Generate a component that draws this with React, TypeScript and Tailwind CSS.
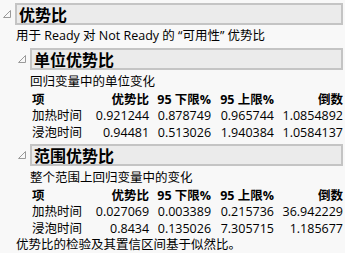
const font = { fontFamily: '"Segoe UI", "Open Sans", "Noto Sans CJK SC", sans-serif' };

const Tri = () => (
  <svg width="10" height="10" viewBox="0 0 10 10" className="shrink-0">
    <path d="M1.5 8.5 L8.5 8.5 L8.5 1.5 Z" fill="none" stroke="#9a9a9a" strokeWidth="1" />
  </svg>
);

const Header = ({ title }: { title: string }) => (
  <div className="flex items-center">
    <div className="w-[15px] flex justify-center pr-[2px]">
      <Tri />
    </div>
    <div className="flex-1 h-[22px] bg-[#ebebeb] border-2 border-[#c4c4c4] flex items-center pl-[2px] text-[16px] font-bold text-black leading-none font-['Noto_Sans_CJK_SC',sans-serif]">
      {title}
    </div>
  </div>
);

type Row = [string, string, string, string, string];

const Table = ({ rows }: { rows: Row[] }) => (
  <table className="ml-[3px] text-[12.5px] text-black border-collapse">
    <thead>
      <tr className="h-[16px] font-bold">
        <th className="text-left w-[64px] font-bold">项</th>
        <th className="text-right w-[47px] font-bold">优势比</th>
        <th className="text-right w-[62px] font-bold">95 下限%</th>
        <th className="text-right w-[63px] font-bold">95 上限%</th>
        <th className="text-right w-[69px] font-bold">倒数</th>
      </tr>
    </thead>
    <tbody>
      {rows.map((r) => (
        <tr key={r[0]} className="h-[16.5px]">
          {r.map((c, i) => (
            <td key={i} className={i === 0 ? 'text-left' : 'text-right'}>
              {c}
            </td>
          ))}
        </tr>
      ))}
    </tbody>
  </table>
);

export default function App() {
  return (
    <div className="w-[345px] h-[253px] bg-[#f8f8f8] pt-[3px] pr-[2px] text-[12.5px] text-black leading-[16px] overflow-hidden" style={font}>
      <Header title="优势比" />
      <div className="pl-[15px]">
        <div className="pl-[1px] pt-[3px] pb-[4px]">用于 Ready 对 Not Ready 的 “可用性” 优势比</div>
        <Header title="单位优势比" />
        <div className="pl-[14px]">
          <div className="pl-[1px] pt-[4px] pb-[2px]">回归变量中的单位变化</div>
          <Table
            rows={[
              ['加热时间', '0.921244', '0.878749', '0.965744', '1.0854892'],
              ['浸泡时间', '0.94481', '0.513026', '1.940384', '1.0584137'],
            ]}
          />
        </div>
        <div className="pt-[3px]">
          <Header title="范围优势比" />
        </div>
        <div className="pl-[14px]">
          <div className="pl-[1px] pt-[4px] pb-[2px]">整个范围上回归变量中的变化</div>
          <Table
            rows={[
              ['加热时间', '0.027069', '0.003389', '0.215736', '36.942229'],
              ['浸泡时间', '0.8434', '0.135026', '7.305715', '1.185677'],
            ]}
          />
        </div>
        <div className="pl-[1px]">优势比的检验及其置信区间基于似然比。</div>
      </div>
    </div>
  );
}
